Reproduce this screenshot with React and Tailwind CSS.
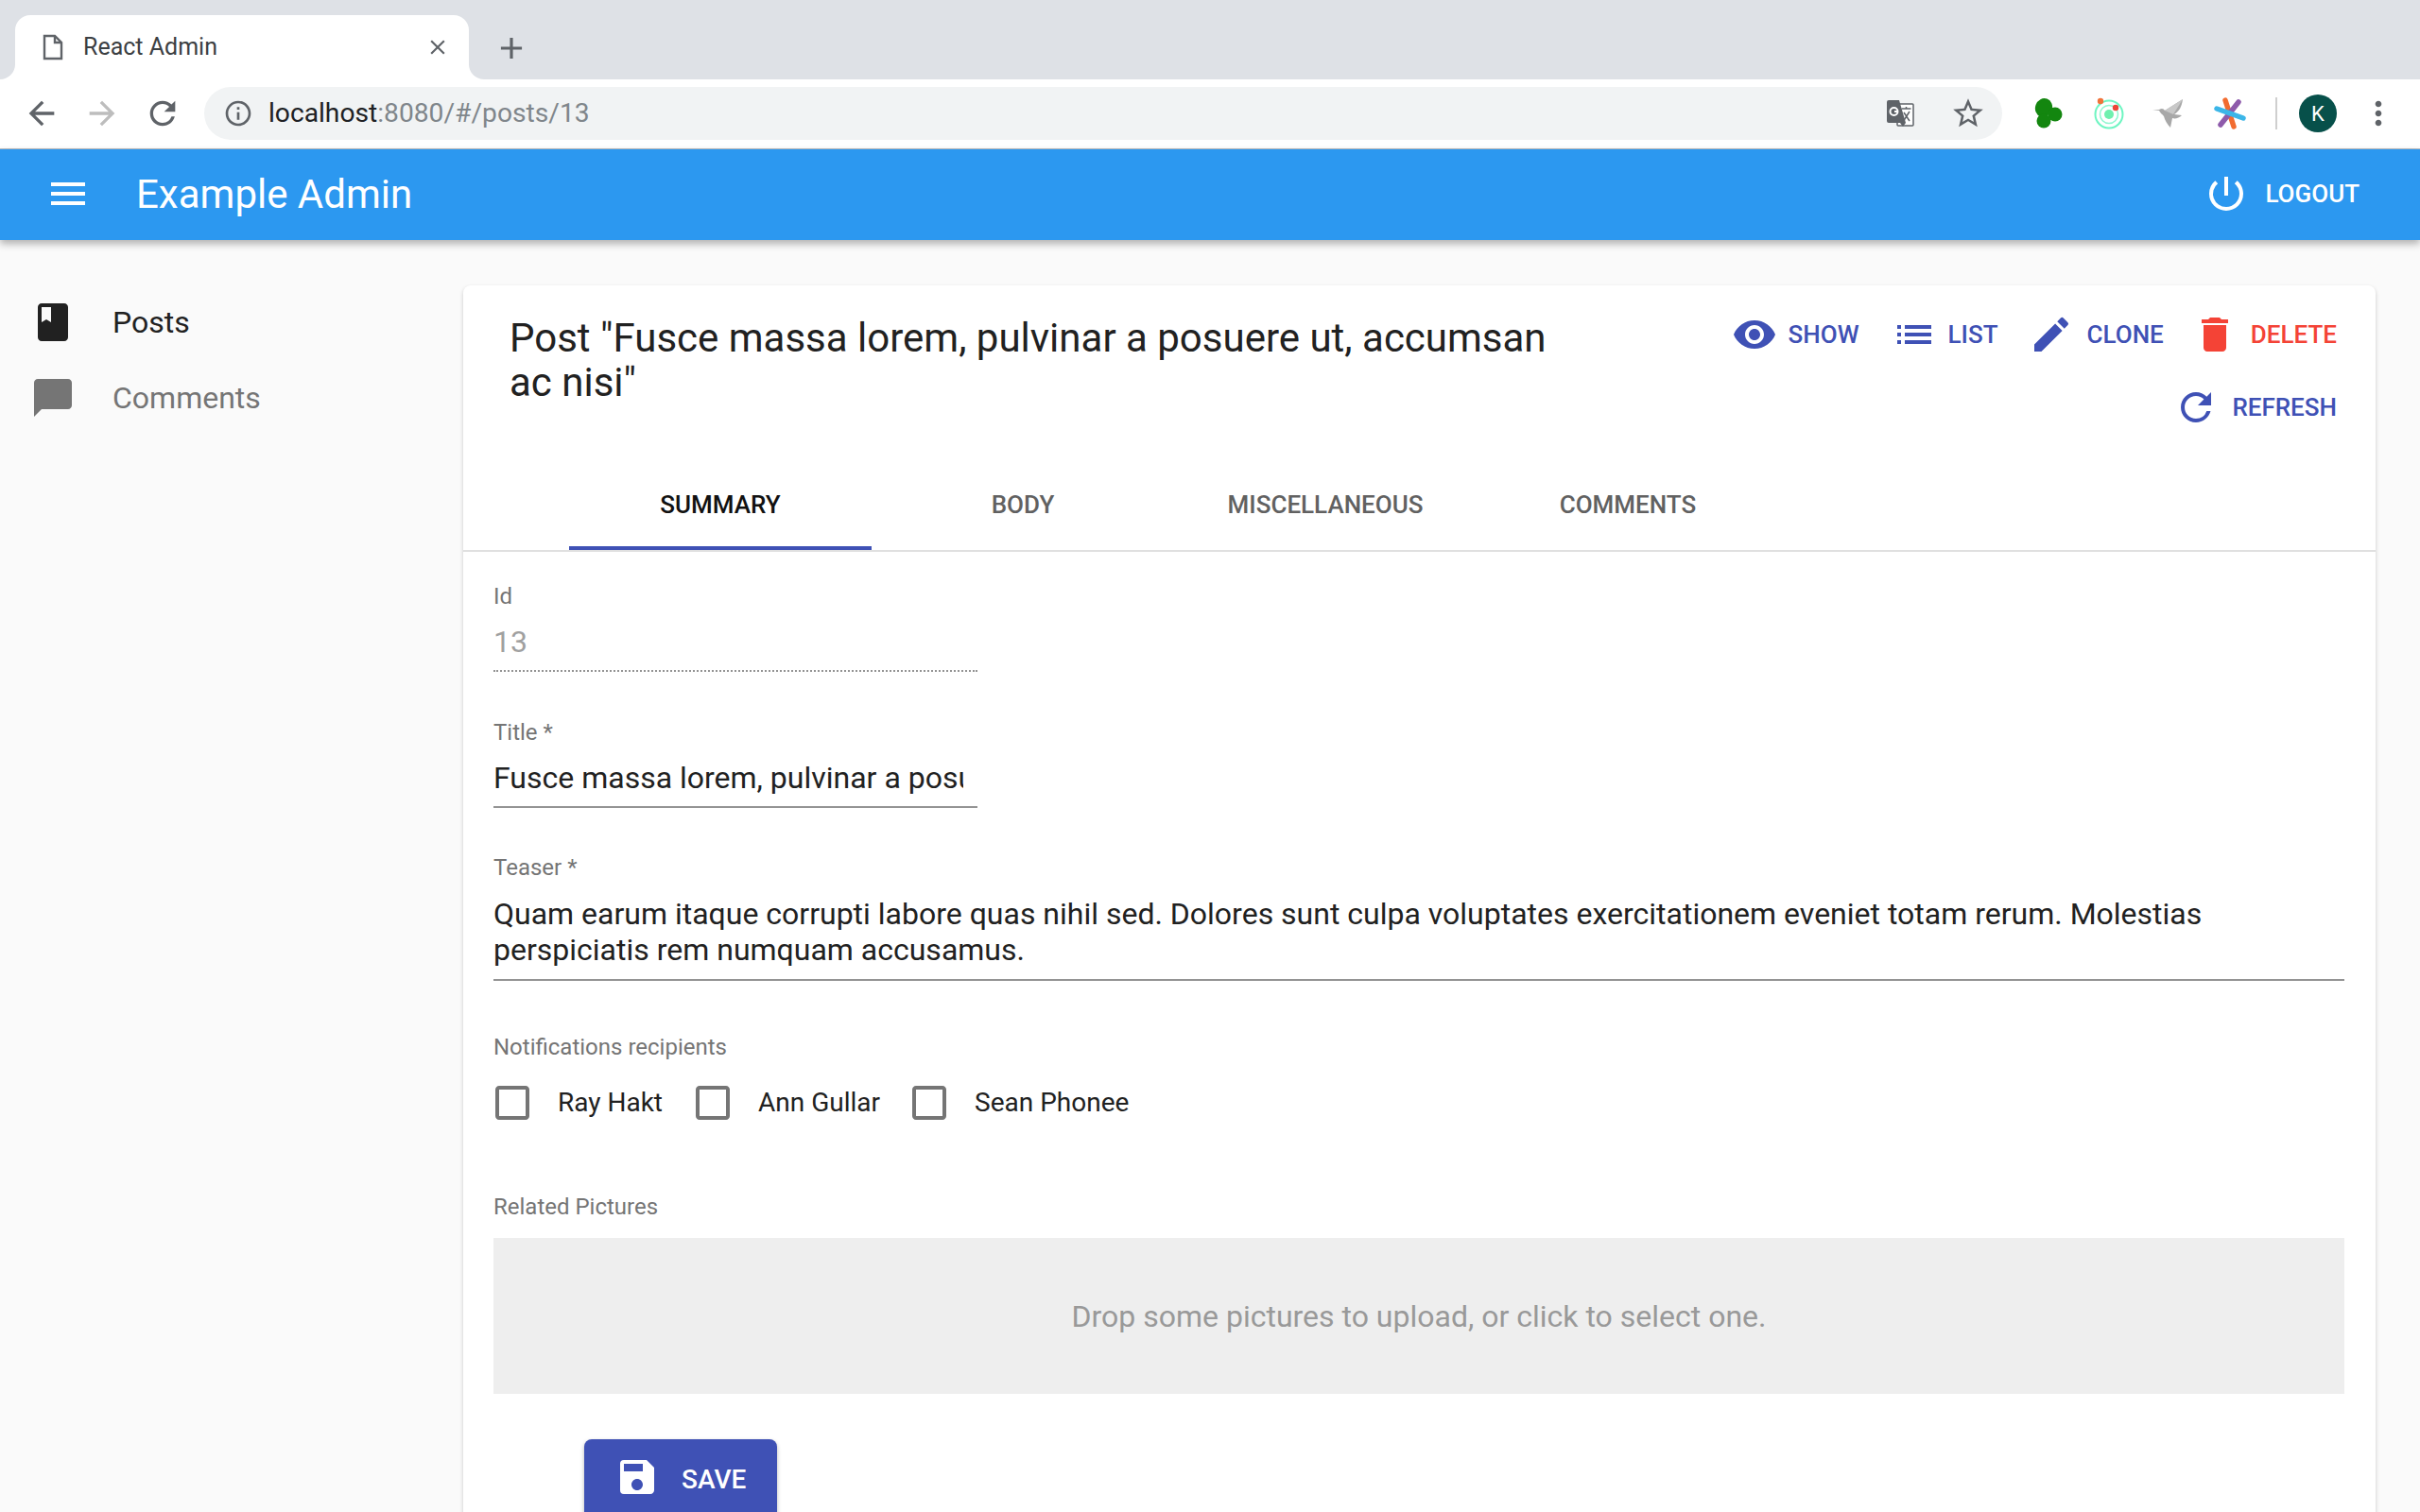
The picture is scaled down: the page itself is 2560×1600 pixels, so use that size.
import {
  MdAdd, MdArrowBack, MdArrowForward, MdBook, MdChatBubble, MdCheckBoxOutlineBlank, MdClose, MdCreate, MdDelete,
  MdInfoOutline, MdList, MdMenu, MdMoreVert, MdPowerSettingsNew, MdRefresh, MdRemoveRedEye, MdSave, MdStarBorder,
} from "react-icons/md";

function FileIcon() {
  return (
    <svg width="24" height="28" viewBox="0 0 24 28" fill="none" stroke="#5f6368" strokeWidth="2.4">
      <path d="M3 2h11l7 7v17H3z" />
      <path d="M14 2v7h7" />
    </svg>
  );
}

function TranslateIcon() {
  return (
    <svg width="30" height="30" viewBox="0 0 30 30">
      <rect x="12" y="5" width="17" height="23" rx="1" fill="#fff" stroke="#5f6368" strokeWidth="1.5" />
      <path d="M1 3a2 2 0 0 1 2-2h11l7 24H3a2 2 0 0 1-2-2z" fill="#5f6368" />
      <path d="M15 25l3 4 3-4z" fill="#5f6368" />
      <path d="M16.5 10h10M21.5 8v2M18 24l7-11M19 14l6 9" stroke="#5f6368" strokeWidth="1.5" fill="none" />
      <circle cx="8.5" cy="13" r="4" fill="none" stroke="#fff" strokeWidth="2" />
      <path d="M9 13h4" stroke="#fff" strokeWidth="2" />
    </svg>
  );
}

function Clover() {
  return (
    <svg width="30" height="32" viewBox="0 0 30 32" fill="#13860f">
      <ellipse cx="10" cy="10" rx="9" ry="10" transform="rotate(20 10 10)" />
      <ellipse cx="22" cy="17" rx="7.5" ry="7.5" />
      <ellipse cx="10" cy="24" rx="7.5" ry="7.5" />
    </svg>
  );
}

function TargetExt() {
  return (
    <svg width="34" height="34" viewBox="0 0 34 34" fill="none">
      <circle cx="17" cy="18" r="14.5" stroke="#6ff5c2" strokeWidth="2" />
      <circle cx="17" cy="18" r="9.5" stroke="#8ff7d0" strokeWidth="1.5" />
      <circle cx="17" cy="18" r="5" fill="#6ff0ae" />
      <circle cx="8" cy="4" r="3.2" fill="#f0733a" />
      <circle cx="24" cy="11" r="3.2" fill="#ee4438" />
    </svg>
  );
}

function BirdExt() {
  return (
    <svg width="34" height="32" viewBox="0 0 34 32">
      <path d="M0 12l7 0c3-2 5-1 6 1L32 1c-1 8-4 13-9 16l8 1c-3 3-7 4-10 3l-2 10c-3-3-6-8-7-12C10 17 8 15 7 13z" fill="#a8a8a8" />
      <path d="M13 13L32 1 22 17z" fill="#c8c8c8" />
    </svg>
  );
}

function StarExt() {
  return (
    <svg width="34" height="34" viewBox="0 0 34 34" fill="none" strokeLinecap="round">
      <path d="M12 3l9 28" stroke="#f26c30" strokeWidth="5.5" />
      <path d="M26 5L7 29" stroke="#8e5bab" strokeWidth="5.5" />
      <path d="M3 12l28 10" stroke="#3cb6e8" strokeWidth="5.5" />
    </svg>
  );
}

function Field({ label, className, children }) {
  return (
    <div className={className}>
      <div className="h-[28px] text-[24px] leading-[28px] text-[#757575]">{label}</div>
      {children}
    </div>
  );
}

function Action({ icon: Icon, label, color = "text-[#3f51b5]", iconClass, gap }) {
  return (
    <div className={`flex h-[36px] items-center font-medium ${color}`}>
      <Icon className={iconClass} />
      <span className={gap}>{label}</span>
    </div>
  );
}

function Check({ label, className }) {
  return (
    <div className={`flex items-center ${className}`}>
      <MdCheckBoxOutlineBlank className="size-[48px] text-[#757575]" />
      <span className="ml-[24px] text-[#212121]">{label}</span>
    </div>
  );
}

export default function App() {
  return (
    <div className="h-[1600px] w-[2560px] overflow-hidden bg-[#fafafa] font-['Roboto',sans-serif]">
      {/* chrome tabs */}
      <div className="flex h-[84px] items-start bg-[#dee1e6] pl-4 pt-4">
        <div className="relative flex h-[68px] w-[480px] items-center rounded-t-[16px] bg-white pl-[28px] pr-[20px]">
          <span className="absolute bottom-0 left-[-16px] size-4 bg-white">
            <span className="block size-4 rounded-br-[16px] bg-[#dee1e6]" />
          </span>
          <span className="absolute bottom-0 right-[-16px] size-4 bg-white">
            <span className="block size-4 rounded-bl-[16px] bg-[#dee1e6]" />
          </span>
          <FileIcon />
          <span className="ml-[20px] text-[25px] text-[#3c4043]">React Admin</span>
          <MdClose className="ml-auto size-[26px] text-[#5f6368]" />
        </div>
        <MdAdd className="ml-[26px] mt-[16px] size-[38px] text-[#5f6368]" />
      </div>

      {/* chrome toolbar */}
      <div className="flex h-[74px] items-center border-b border-[#b8bbbf] bg-white pb-[1px]">
        <MdArrowBack className="ml-[24px] size-[40px] text-[#5f6368]" />
        <MdArrowForward className="ml-[24px] size-[40px] text-[#bdbdbd]" />
        <MdRefresh className="ml-[24px] size-[40px] text-[#5f6368]" />
        <div className="ml-[24px] flex h-[56px] w-[1902px] items-center rounded-full bg-[#f1f3f4] pl-[20px] pr-[17px]">
          <MdInfoOutline className="size-[32px] text-[#5f6368]" />
          <span className="ml-[16px] text-[28.2px] text-[#202124]">
            localhost<span className="text-[#80868b]">:8080/#/posts/13</span>
          </span>
          <span className="ml-auto flex items-center">
            <TranslateIcon />
            <MdStarBorder className="ml-[38px] size-[38px] text-[#5f6368]" />
          </span>
        </div>
        <div className="ml-[34px] flex items-center">
          <Clover />
          <span className="ml-[32px]"><TargetExt /></span>
          <span className="ml-[29px]"><BirdExt /></span>
          <span className="ml-[31px]"><StarExt /></span>
          <span className="ml-[31px] h-[34px] w-[2px] bg-[#cfcfcf]" />
          <span className="ml-[23px] flex size-[40px] items-center justify-center rounded-full bg-[#07504a] text-[22px] text-white">K</span>
          <MdMoreVert className="ml-[24px] size-[40px] text-[#5f6368]" />
        </div>
      </div>

      {/* app bar */}
      <header className="relative z-10 flex h-[96px] items-center bg-[#2c98f0] pb-[2px] pl-[48px] pr-[64px] text-white shadow-[0_4px_8px_rgba(0,0,0,0.3)]">
        <MdMenu className="size-[48px]" />
        <span className="ml-[48px] text-[42px]">Example Admin</span>
        <div className="ml-auto flex items-center">
          <MdPowerSettingsNew className="size-[48px]" />
          <span className="ml-[17px] text-[26px] font-medium">LOGOUT</span>
        </div>
      </header>

      <div className="flex">
        {/* sidebar */}
        <nav className="w-[490px] pl-[32px] pt-[47px] text-[32px]">
          <div className="flex h-[80px] items-center text-[#212121]">
            <MdBook className="size-[48px]" />
            <span className="ml-[39px]">Posts</span>
          </div>
          <div className="flex h-[80px] items-center text-[#757575]">
            <MdChatBubble className="size-[48px]" />
            <span className="ml-[39px]">Comments</span>
          </div>
        </nav>

        {/* edit card */}
        <main className="mt-[48px] w-[2023px] rounded-t-[8px] bg-white shadow-[0_2px_4px_rgba(0,0,0,0.2)]">
          <div className="flex h-[184px] justify-between pl-[49px] pr-[41px]">
            <h1 className="mt-[32px] w-[1120px] text-[42px] leading-[47px] text-[#212121]">
              Post "Fusce massa lorem, pulvinar a posuere ut, accumsan ac nisi"
            </h1>
            <div className="mt-[34px] w-[660px] text-[26px]">
              <div className="flex justify-end">
                <Action icon={MdRemoveRedEye} label="SHOW" iconClass="size-[48px]" gap="ml-[12px]" />
                <Action icon={MdList} label="LIST" iconClass="ml-[34px] size-[48px]" gap="ml-[12px]" />
                <Action icon={MdCreate} label="CLONE" iconClass="ml-[32px] size-[48px]" gap="ml-[14px]" />
                <Action icon={MdDelete} label="DELETE" color="text-[#f44336]" iconClass="ml-[30px] size-[48px]" gap="ml-[14px]" />
              </div>
              <div className="mt-[41px] flex justify-end">
                <Action icon={MdRefresh} label="REFRESH" iconClass="size-[48px]" gap="ml-[14px]" />
              </div>
            </div>
          </div>

          {/* tabs */}
          <div className="flex h-[98px] border-b-2 border-[#e0e0e0] pl-[112px] text-[26px] font-medium text-[#616161]">
            <div className="flex h-[96px] w-[320px] items-center justify-center border-b-4 border-[#3f51b5] pt-[4px] text-[#111]">SUMMARY</div>
            <div className="flex h-[96px] w-[320px] items-center justify-center">BODY</div>
            <div className="flex h-[96px] w-[320px] items-center justify-center">MISCELLANEOUS</div>
            <div className="flex h-[96px] w-[320px] items-center justify-center">COMMENTS</div>
          </div>

          {/* form */}
          <div className="pl-[32px] pr-[33px] pt-[33px] text-[32px]">
            <Field label="Id" className="w-[512px]">
              <div className="mt-[10px] h-[42px] text-[#a0a0a0]">13</div>
              <div className="mt-[12px] border-b-2 border-dotted border-[#949494]" />
            </Field>
            <Field label="Title *" className="mt-[50px] w-[512px]">
              <div className="mt-[10px] h-[42px] w-[497px] overflow-hidden whitespace-nowrap text-[#212121]">
                Fusce massa lorem, pulvinar a posuere ut, accumsan ac nisi
              </div>
              <div className="mt-[12px] border-b-2 border-[#949494]" />
            </Field>
            <Field label="Teaser *" className="mt-[49px]">
              <div className="mt-[16px] leading-[38px] text-[#212121]">
                Quam earum itaque corrupti labore quas nihil sed. Dolores sunt culpa voluptates exercitationem eveniet totam rerum. Molestias perspiciatis rem numquam accusamus.
              </div>
              <div className="mt-[12px] border-b-2 border-[#949494]" />
            </Field>
            <Field label="Notifications recipients" className="mt-[56px]">
              <div className="ml-[-4px] mt-[21px] flex h-[48px] items-center text-[28px]">
                <Check label="Ray Hakt" />
                <Check label="Ann Gullar" className="ml-[29px]" />
                <Check label="Sean Phonee" className="ml-[28px]" />
              </div>
            </Field>
            <Field label="Related Pictures" className="mt-[72px]">
              <div className="mt-[19px] flex h-[165px] items-center justify-center bg-[#eeeeee] text-[32px] text-[#999999]">
                Drop some pictures to upload, or click to select one.
              </div>
            </Field>
            <div className="ml-[96px] mt-[48px] flex h-[100px] w-[204px] items-start rounded-[8px] bg-[#3f51b5] pl-[32px] pt-[16px] text-[28px] font-medium text-white shadow-[0_2px_4px_rgba(0,0,0,0.3)]">
              <MdSave className="size-[48px]" />
              <span className="ml-[23px] mt-[6px]">SAVE</span>
            </div>
          </div>
        </main>
      </div>
    </div>
  );
}
